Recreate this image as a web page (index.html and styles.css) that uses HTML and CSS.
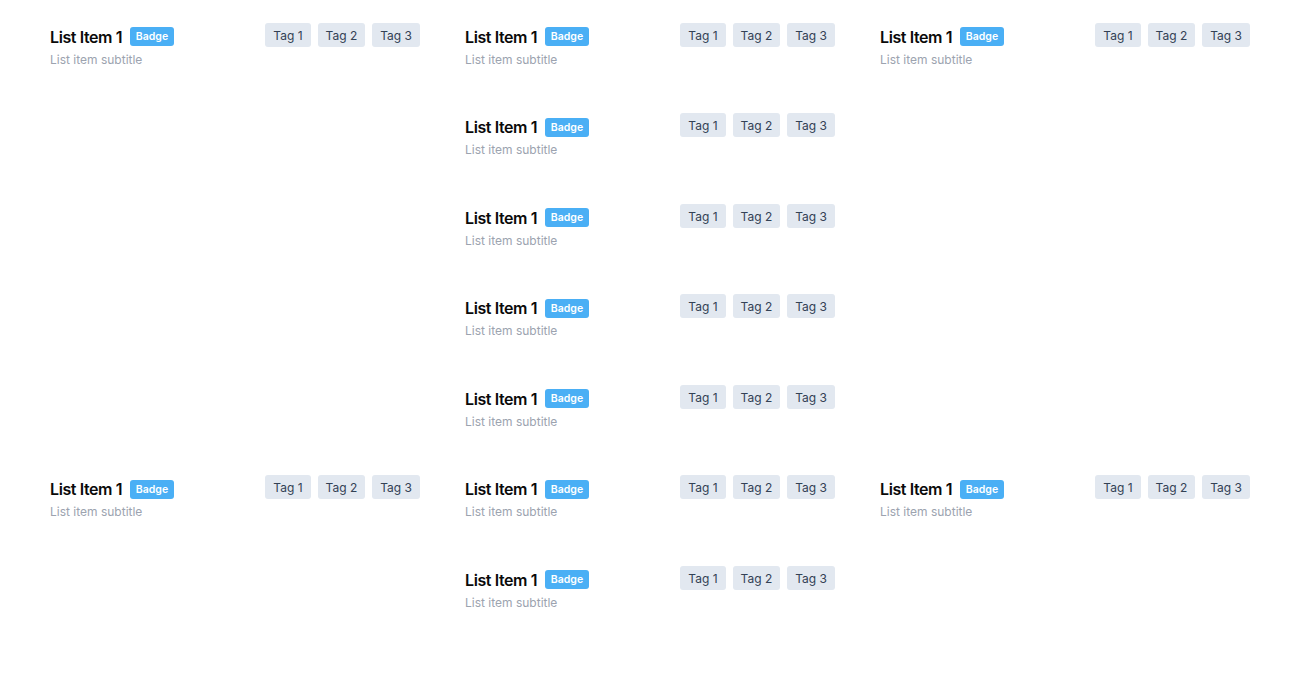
FILE: index.html
```html
<!DOCTYPE html>
<html lang="en">
<head>
<meta charset="utf-8">
<title>List</title>
<link rel="stylesheet" href="styles.css">
</head>
<body>
<div class="board">
  <div class="item c1 r1"><div class="main"><div class="head"><span class="title">List Item 1</span><span class="badge">Badge</span></div><div class="sub">List item subtitle</div></div><div class="tags"><span class="tag">Tag 1</span><span class="tag">Tag 2</span><span class="tag">Tag 3</span></div></div>
  <div class="item c1 r6"><div class="main"><div class="head"><span class="title">List Item 1</span><span class="badge">Badge</span></div><div class="sub">List item subtitle</div></div><div class="tags"><span class="tag">Tag 1</span><span class="tag">Tag 2</span><span class="tag">Tag 3</span></div></div>

  <div class="item c2 r1"><div class="main"><div class="head"><span class="title">List Item 1</span><span class="badge">Badge</span></div><div class="sub">List item subtitle</div></div><div class="tags"><span class="tag">Tag 1</span><span class="tag">Tag 2</span><span class="tag">Tag 3</span></div></div>
  <div class="item c2 r2"><div class="main"><div class="head"><span class="title">List Item 1</span><span class="badge">Badge</span></div><div class="sub">List item subtitle</div></div><div class="tags"><span class="tag">Tag 1</span><span class="tag">Tag 2</span><span class="tag">Tag 3</span></div></div>
  <div class="item c2 r3"><div class="main"><div class="head"><span class="title">List Item 1</span><span class="badge">Badge</span></div><div class="sub">List item subtitle</div></div><div class="tags"><span class="tag">Tag 1</span><span class="tag">Tag 2</span><span class="tag">Tag 3</span></div></div>
  <div class="item c2 r4"><div class="main"><div class="head"><span class="title">List Item 1</span><span class="badge">Badge</span></div><div class="sub">List item subtitle</div></div><div class="tags"><span class="tag">Tag 1</span><span class="tag">Tag 2</span><span class="tag">Tag 3</span></div></div>
  <div class="item c2 r5"><div class="main"><div class="head"><span class="title">List Item 1</span><span class="badge">Badge</span></div><div class="sub">List item subtitle</div></div><div class="tags"><span class="tag">Tag 1</span><span class="tag">Tag 2</span><span class="tag">Tag 3</span></div></div>
  <div class="item c2 r6"><div class="main"><div class="head"><span class="title">List Item 1</span><span class="badge">Badge</span></div><div class="sub">List item subtitle</div></div><div class="tags"><span class="tag">Tag 1</span><span class="tag">Tag 2</span><span class="tag">Tag 3</span></div></div>
  <div class="item c2 r7"><div class="main"><div class="head"><span class="title">List Item 1</span><span class="badge">Badge</span></div><div class="sub">List item subtitle</div></div><div class="tags"><span class="tag">Tag 1</span><span class="tag">Tag 2</span><span class="tag">Tag 3</span></div></div>

  <div class="item c3 r1"><div class="main"><div class="head"><span class="title">List Item 1</span><span class="badge">Badge</span></div><div class="sub">List item subtitle</div></div><div class="tags"><span class="tag">Tag 1</span><span class="tag">Tag 2</span><span class="tag">Tag 3</span></div></div>
  <div class="item c3 r6"><div class="main"><div class="head"><span class="title">List Item 1</span><span class="badge">Badge</span></div><div class="sub">List item subtitle</div></div><div class="tags"><span class="tag">Tag 1</span><span class="tag">Tag 2</span><span class="tag">Tag 3</span></div></div>
</div>
</body>
</html>
```
FILE: styles.css
```css
html, body {
  margin: 0;
  padding: 0;
  background: #ffffff;
}
body {
  font-family: Inter, "Noto Sans", sans-serif;
}
.board {
  display: grid;
  grid-template-columns: repeat(3, 370px);
  grid-template-rows: repeat(7, 90.5px);
  column-gap: 45px;
  padding: 22.6px 50px 0;
}
.c1 { grid-column: 1; }
.c2 { grid-column: 2; }
.c3 { grid-column: 3; }
.r1 { grid-row: 1; }
.r2 { grid-row: 2; }
.r3 { grid-row: 3; }
.r4 { grid-row: 4; }
.r5 { grid-row: 5; }
.r6 { grid-row: 6; }
.r7 { grid-row: 7; }
.item {
  display: flex;
  justify-content: space-between;
  align-items: flex-start;
}
.main {
  display: flex;
  flex-direction: column;
}
.head {
  display: flex;
  align-items: center;
  gap: 7.5px;
  height: 28px;
}
.title {
  font-size: 16px;
  font-weight: 600;
  color: #0a0a0a;
  letter-spacing: -0.4px;
}
.badge {
  background: #4aaff5;
  color: #ffffff;
  font-size: 10.5px;
  font-weight: 600;
  line-height: 19px;
  height: 19px;
  padding: 0 6.2px;
  border-radius: 3px;
}
.sub {
  font-size: 12px;
  color: #9ca3af;
  line-height: 16px;
  margin-top: 1px;
}
.tags {
  display: flex;
  gap: 7px;
}
.tag {
  background: #e2e8f0;
  color: #334155;
  font-size: 12px;
  line-height: 22px;
  height: 24px;
  padding: 2px 8px 0;
  box-sizing: border-box;
  border-radius: 3px;
}
```
